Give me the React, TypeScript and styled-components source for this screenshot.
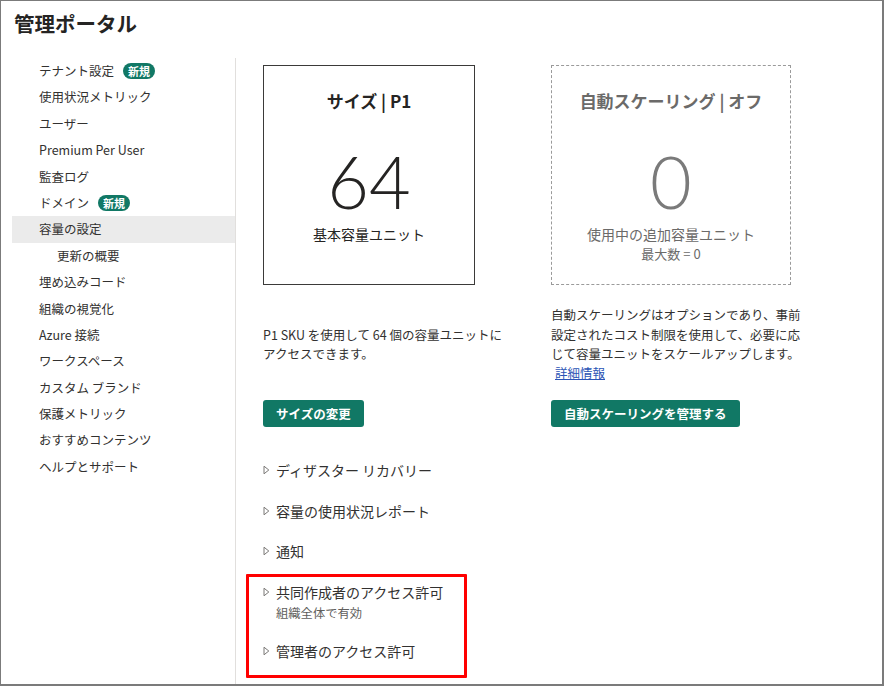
import React from "react";
import styled, { createGlobalStyle, css } from "styled-components";

const GlobalStyle = createGlobalStyle`
  html, body { margin: 0; padding: 0; background: #ffffff; }
  body {
    font-family: "Noto Sans CJK JP", "Noto Sans", sans-serif;
    color: #323130;
  }
  * { box-sizing: border-box; }
`;

const Frame = styled.div`
  width: 884px;
  height: 686px;
  border-style: solid;
  border-color: #7b7b7b;
  border-width: 1px 2px 2px 1px;
  display: flex;
  flex-direction: column;
  overflow: hidden;
  background: #fff;
`;

const Title = styled.h1`
  margin: 0;
  padding: 8px 0 0 13px;
  font-size: 20.5px;
  line-height: 28px;
  font-weight: 700;
  color: #252423;
`;

const Body = styled.div`
  display: flex;
  flex: 1;
  margin-top: 21px;
  padding-left: 11px;
`;

const Sidebar = styled.nav`
  width: 224px;
  flex-shrink: 0;
  border-right: 1px solid #e1dfdd;
  display: flex;
  flex-direction: column;
`;

const NavItem = styled.div<{ $active?: boolean; $sub?: boolean }>`
  height: 26.4px;
  line-height: 26.4px;
  padding-left: ${(p) => (p.$sub ? 45 : 27)}px;
  font-size: 12.5px;
  color: #323130;
  white-space: nowrap;
  display: flex;
  align-items: center;
  ${(p) =>
    p.$active &&
    css`
      background: #ebebeb;
    `}
`;

const Badge = styled.span`
  display: inline-flex;
  align-items: center;
  justify-content: center;
  margin-left: 9px;
  height: 16px;
  padding: 0 5px;
  border-radius: 8px;
  background: #117865;
  color: #fff;
  font-size: 11px;
  font-weight: 700;
  line-height: 16px;
`;

const Content = styled.main`
  flex: 1;
  padding: 7px 0 0 27px;
  display: flex;
  flex-direction: column;
`;

const CardRow = styled.div`
  display: grid;
  grid-template-columns: 288px 250px;
`;

const Column = styled.section`
  display: flex;
  flex-direction: column;
  align-items: flex-start;
`;

const Card = styled.div<{ $muted?: boolean }>`
  width: ${(p) => (p.$muted ? 240 : 212)}px;
  height: 220px;
  padding-top: 23px;
  display: flex;
  flex-direction: column;
  align-items: center;
  border: 1px ${(p) => (p.$muted ? "dashed #9a9a9a" : "solid #3b3a39")};
  color: ${(p) => (p.$muted ? "#6b6a69" : "#252423")};
`;

const CardTitle = styled.div`
  font-size: 17px;
  line-height: 24px;
  font-weight: 700;
  white-space: nowrap;
`;

const BigNumber = styled.div<{ $muted?: boolean }>`
  margin-top: 38px;
  font-family: "Lato", "Open Sans", sans-serif;
  font-weight: 300;
  font-size: 72px;
  line-height: 60px;
  height: 60px;
  color: ${(p) => (p.$muted ? "#7a7a7a" : "#252423")};
`;

const CardSub = styled.div<{ $first?: boolean }>`
  margin-top: ${(p) => (p.$first ? 13 : 0)}px;
  font-size: 14px;
  line-height: 20px;
  white-space: nowrap;
`;

const CardSmall = styled.div`
  font-size: 13px;
  line-height: 20px;
`;

const Desc = styled.p`
  margin: 20px 0 0;
  height: 78px;
  display: flex;
  align-items: center;
  font-size: 12.5px;
  line-height: 19.3px;
  color: #323130;
  white-space: nowrap;
`;

const Link = styled.a`
  color: #2b54b5;
  text-decoration: underline;
  margin-left: 4px;
`;

const PrimaryButton = styled.button`
  margin-top: 17px;
  height: 27px;
  padding: 0 13px;
  border: none;
  border-radius: 3px;
  background: #117865;
  color: #fff;
  font-family: inherit;
  font-size: 12.5px;
  font-weight: 700;
  line-height: 27px;
  white-space: nowrap;
`;

const Accordion = styled.div`
  margin-top: 23px;
  display: flex;
  flex-direction: column;
`;

const Item = styled.div`
  padding: 10px 0;
`;

const ItemHeader = styled.div`
  display: flex;
  align-items: center;
  gap: 6px;
  font-size: 14px;
  line-height: 20.5px;
  color: #323130;
  white-space: nowrap;
`;

const ItemSub = styled.div`
  margin: 2px 0 -2px 13px;
  font-size: 12.3px;
  line-height: 19px;
  color: #605e5c;
`;

const Highlight = styled.div`
  position: relative;
  &::after {
    content: "";
    position: absolute;
    top: 2px;
    left: -17px;
    width: 215px;
    height: 98px;
    border: 3px solid #ff0000;
    border-radius: 1px;
    pointer-events: none;
  }
`;

const Caret = () => (
  <svg width="7" height="10" viewBox="0 0 7 10" aria-hidden="true">
    <path d="M1 1.2 L5.8 5 L1 8.8 Z" fill="none" stroke="#7a7876" strokeWidth="1" strokeLinejoin="round" />
  </svg>
);

const nav: { label: string; badge?: boolean; active?: boolean; sub?: boolean }[] = [
  { label: "テナント設定", badge: true },
  { label: "使用状況メトリック" },
  { label: "ユーザー" },
  { label: "Premium Per User" },
  { label: "監査ログ" },
  { label: "ドメイン", badge: true },
  { label: "容量の設定", active: true },
  { label: "更新の概要", sub: true },
  { label: "埋め込みコード" },
  { label: "組織の視覚化" },
  { label: "Azure 接続" },
  { label: "ワークスペース" },
  { label: "カスタム ブランド" },
  { label: "保護メトリック" },
  { label: "おすすめコンテンツ" },
  { label: "ヘルプとサポート" },
];

const AccItem = ({ title, sub }: { title: string; sub?: string }) => (
  <Item>
    <ItemHeader>
      <Caret />
      <span>{title}</span>
    </ItemHeader>
    {sub && <ItemSub>{sub}</ItemSub>}
  </Item>
);

export default function App() {
  return (
    <>
      <GlobalStyle />
      <Frame>
        <Title>管理ポータル</Title>
        <Body>
          <Sidebar>
            {nav.map((n) => (
              <NavItem key={n.label} $active={n.active} $sub={n.sub}>
                {n.label}
                {n.badge && <Badge>新規</Badge>}
              </NavItem>
            ))}
          </Sidebar>
          <Content>
            <CardRow>
              <Column>
                <Card>
                  <CardTitle>サイズ | P1</CardTitle>
                  <BigNumber>64</BigNumber>
                  <CardSub $first>基本容量ユニット</CardSub>
                </Card>
                <Desc>
                  <span>
                    P1 SKU を使用して 64 個の容量ユニットに
                    <br />
                    アクセスできます。
                  </span>
                </Desc>
                <PrimaryButton>サイズの変更</PrimaryButton>
              </Column>
              <Column>
                <Card $muted>
                  <CardTitle>自動スケーリング | オフ</CardTitle>
                  <BigNumber $muted>0</BigNumber>
                  <CardSub $first>使用中の追加容量ユニット</CardSub>
                  <CardSmall>最大数 = 0</CardSmall>
                </Card>
                <Desc>
                  <span>
                    自動スケーリングはオプションであり、事前
                    <br />
                    設定されたコスト制限を使用して、必要に応
                    <br />
                    じて容量ユニットをスケールアップします。
                    <br />
                    <Link href="#">詳細情報</Link>
                  </span>
                </Desc>
                <PrimaryButton>自動スケーリングを管理する</PrimaryButton>
              </Column>
            </CardRow>
            <Accordion>
              <AccItem title="ディザスター リカバリー" />
              <AccItem title="容量の使用状況レポート" />
              <AccItem title="通知" />
              <Highlight>
                <AccItem title="共同作成者のアクセス許可" sub="組織全体で有効" />
                <AccItem title="管理者のアクセス許可" />
              </Highlight>
            </Accordion>
          </Content>
        </Body>
      </Frame>
    </>
  );
}
